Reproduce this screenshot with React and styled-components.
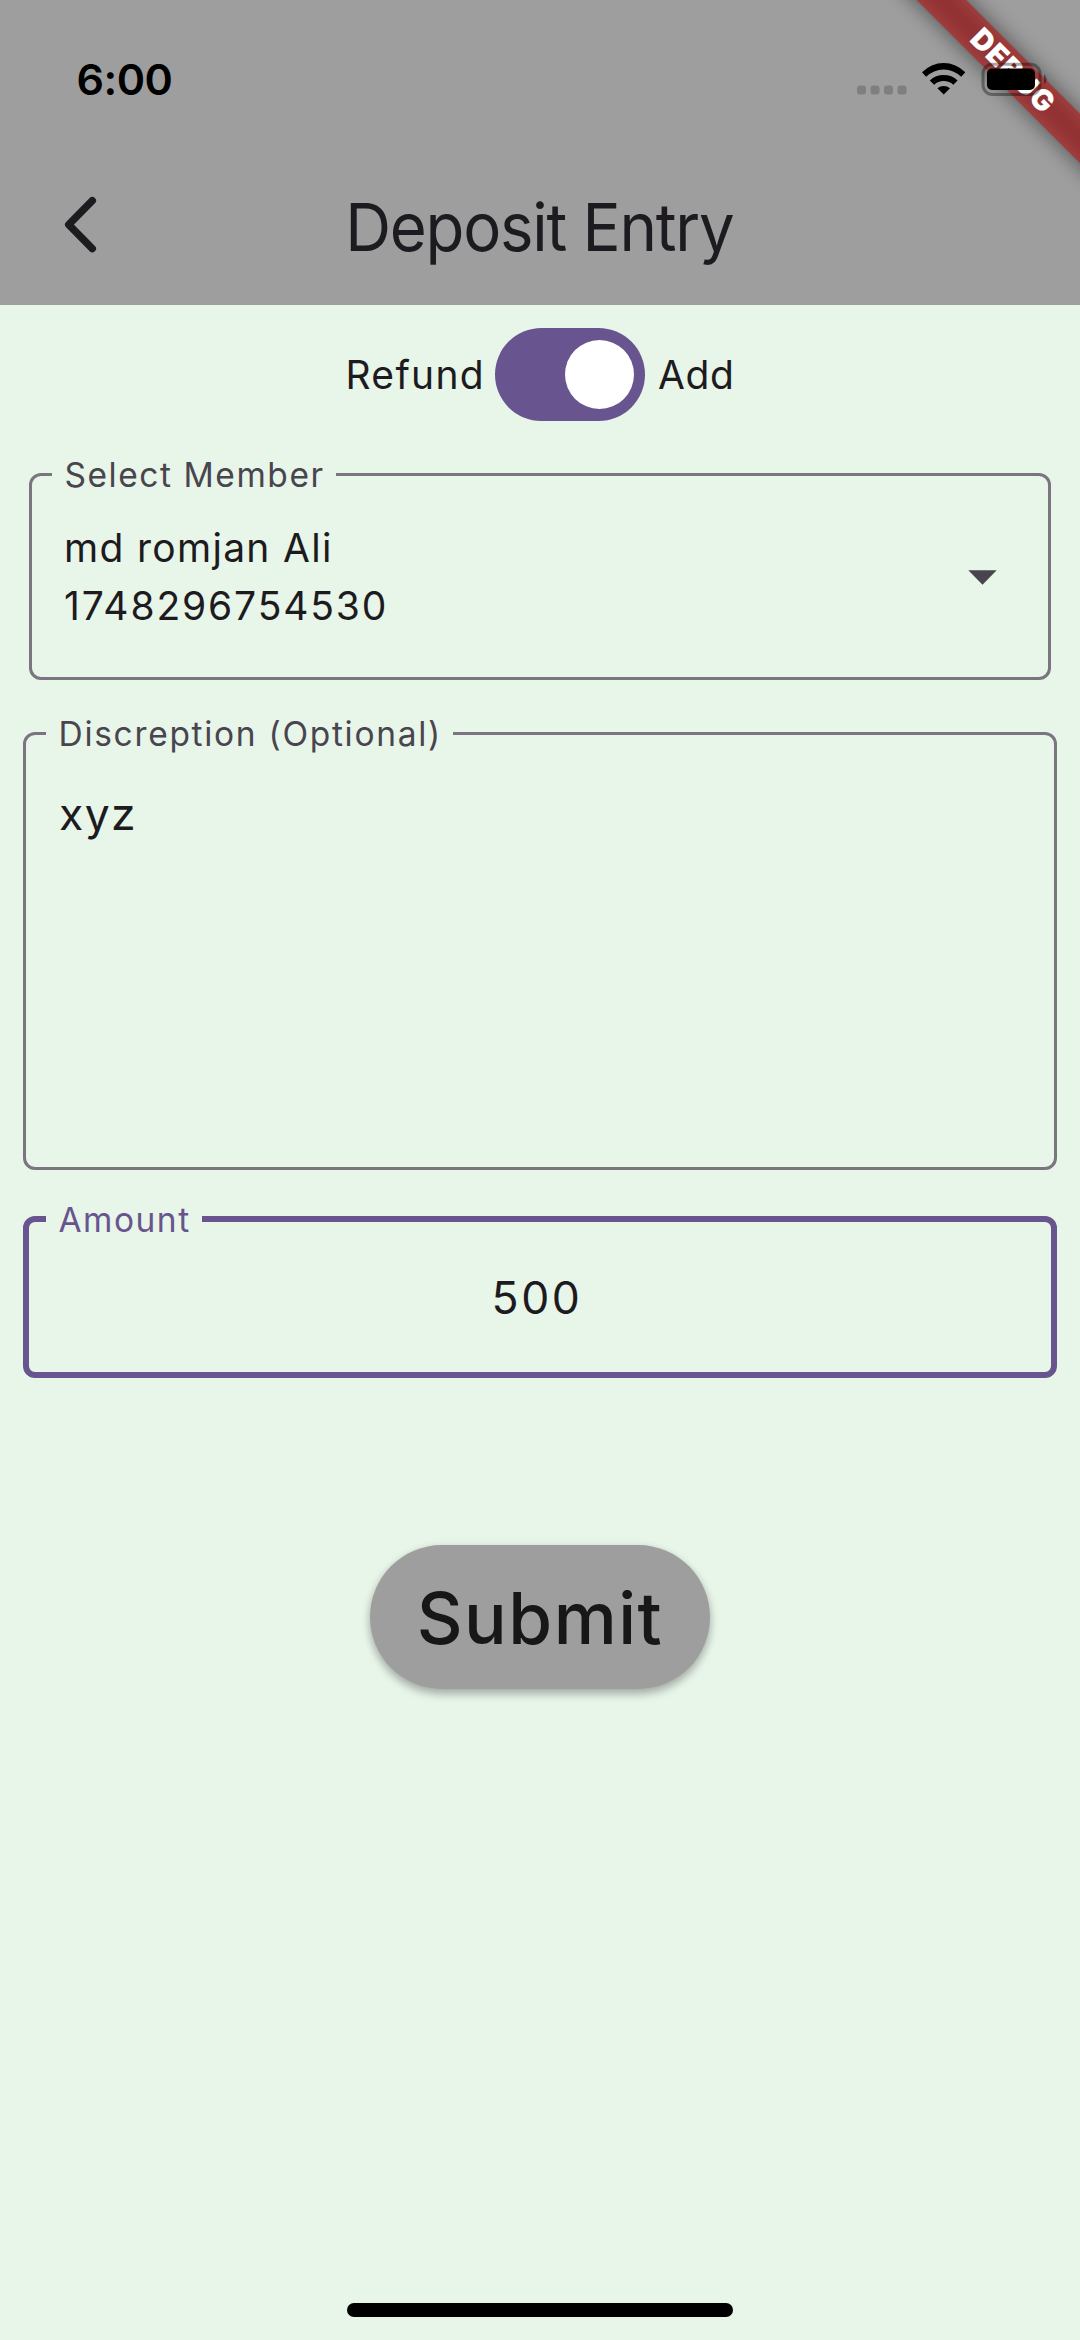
import React from "react";
import styled, { createGlobalStyle } from "styled-components";

const GlobalStyle = createGlobalStyle`
  *, *::before, *::after { box-sizing: border-box; }
  html, body { margin: 0; background: #e8f5e9; }
  body { font-family: Inter, "Liberation Sans", sans-serif; color: #1d1b20; }
`;

const Screen = styled.div`
  position: relative;
  display: flex;
  flex-direction: column;
  width: 1080px;
  height: 2340px;
  overflow: hidden;
  background: #e8f5e9;
`;

const Header = styled.header`
  display: flex;
  flex-direction: column;
  height: 305px;
  background: #9e9e9e;
`;

const StatusBar = styled.div`
  display: flex;
  align-items: center;
  justify-content: space-between;
  height: 143px;
  padding: 14px 32px 0 76.5px;
`;

const Clock = styled.span`
  font-size: 43px;
  line-height: 52px;
  font-weight: 600;
  letter-spacing: -0.5px;
  color: #000;
`;

const StatusIcons = styled.svg`
  position: relative;
  z-index: 2;
  display: block;
  width: 192px;
  height: 34px;
`;

const TitleBar = styled.div`
  display: grid;
  grid-template-columns: 162px 1fr 162px;
  align-items: center;
  height: 162px;
`;

const BackButton = styled.button`
  display: flex;
  align-items: center;
  justify-content: center;
  height: 120px;
  padding: 0;
  border: 0;
  background: none;
  color: #1d1b20;
`;

const Title = styled.h1`
  justify-self: center;
  margin: 0;
  padding: 5px 2px 0 0;
  font-size: 66.5px;
  line-height: 80px;
  font-weight: 400;
  letter-spacing: -1.3px;
  text-align: center;
  white-space: nowrap;
  transform: scaleX(0.955);
`;

const Form = styled.main`
  display: flex;
  flex-direction: column;
  align-items: stretch;
`;

const ModeRow = styled.div`
  display: flex;
  align-items: center;
  justify-content: center;
  height: 138px;
  padding-top: 1px;
`;

const ModeLabel = styled.span`
  font-size: 39px;
  line-height: 58px;
  letter-spacing: ${(p) => p.$spacing};
`;

const Switch = styled.button`
  display: flex;
  align-items: center;
  justify-content: flex-end;
  width: 150px;
  height: 92.5px;
  margin: 0 13px 0 10px;
  padding: 0 11.5px;
  border: 0;
  border-radius: 47px;
  background: #68548e;
`;

const Thumb = styled.span`
  width: 69px;
  height: 69px;
  border-radius: 50%;
  background: #fff;
`;

const Field = styled.fieldset`
  display: block;
  min-width: 0;
  height: ${(p) => p.$height}px;
  margin: ${(p) => p.$margin};
  padding: 0;
  border: ${(p) => (p.$focused ? "6px solid #68548e" : "3px solid #7a757f")};
  border-radius: 12px;
`;

const FieldLabel = styled.legend`
  height: ${(p) => (p.$focused ? 40 : 41)}px;
  margin-left: ${(p) => (p.$focused ? 17 : 20)}px;
  padding: 0 11px 0 12.5px;
  font-size: 33.5px;
  line-height: ${(p) => (p.$focused ? 43 : 42)}px;
  letter-spacing: ${(p) => p.$spacing};
  color: ${(p) => (p.$focused ? "#68548e" : "#49454e")};
  white-space: nowrap;
`;

const SelectBody = styled.div`
  display: flex;
  align-items: center;
  justify-content: space-between;
  padding: 24px 51px 0 32px;
`;

const MemberText = styled.div`
  display: flex;
  flex-direction: column;
  font-size: 39px;
  line-height: 57.6px;
`;

const MemberLine = styled.span`
  letter-spacing: ${(p) => p.$spacing};
`;

const DropdownArrow = styled.svg`
  display: block;
  width: 29px;
  height: 15px;
  margin-top: 2px;
  fill: #49454e;
`;

const FieldValue = styled.div`
  padding: ${(p) => p.$padding};
  font-size: 44.5px;
  line-height: 69px;
  letter-spacing: ${(p) => p.$spacing};
  text-align: ${(p) => p.$align || "left"};
`;

const SubmitButton = styled.button`
  align-self: center;
  width: 340px;
  height: 144px;
  margin-top: 167px;
  padding: 1px 0 0;
  border: 0;
  border-radius: 72px;
  background: #9e9e9e;
  color: #171717;
  font-family: inherit;
  font-size: 71px;
  line-height: 84px;
  font-weight: 500;
  letter-spacing: 1.5px;
  white-space: nowrap;
  box-shadow: 0 6px 8px rgba(0, 0, 0, 0.2), 0 2px 8px rgba(0, 0, 0, 0.14);
`;

const HomeIndicator = styled.div`
  align-self: center;
  width: 386px;
  height: 14px;
  margin-top: auto;
  margin-bottom: 23px;
  border-radius: 7px;
  background: #000;
`;

const Ribbon = styled.div`
  position: absolute;
  z-index: 1;
  top: 51.9px;
  left: 810.8px;
  width: 400px;
  height: 34.6px;
  transform: rotate(45deg);
`;

const RibbonShadow = styled.div`
  position: absolute;
  inset: 0;
  background: rgba(0, 0, 0, 0.5);
  filter: blur(11.4px);
`;

const RibbonBand = styled.div`
  position: relative;
  height: 100%;
  padding-left: 5px;
  background: rgba(183, 28, 28, 0.627);
  color: #fff;
  font-size: 29px;
  line-height: 34.6px;
  font-weight: 900;
  letter-spacing: 1px;
  text-align: center;
`;

export default function App() {
  return (
    <Screen>
      <GlobalStyle />
      <Header>
        <StatusBar>
          <Clock>6:00</Clock>
          <StatusIcons viewBox="0 0 192 34">
            <g fill="#7f7f7f">
              <rect x="1" y="23.5" width="9" height="9" rx="3" />
              <rect x="14.5" y="23.5" width="9" height="9" rx="3" />
              <rect x="28" y="23.5" width="9" height="9" rx="3" />
              <rect x="41.5" y="23.5" width="9" height="9" rx="3" />
            </g>
            <path d="M66 10.3 A30 30 0 0 1 109.300 10.300 L105.200 14.800 A25 25 0 0 0 70.100 14.800 Z" />
            <path d="M73.800 18.500 A20 20 0 0 1 101.600 18.500 L97.300 22.800 A14.200 14.200 0 0 0 78.100 22.800 Z" />
            <path d="M81.400 26.300 A10 10 0 0 1 94 26.300 L87.700 32.600 Z" />
            <rect x="127" y="2.2" width="57" height="30.3" rx="9.500" fill="none" stroke="#000" strokeOpacity="0.35" strokeWidth="3" />
            <rect x="131" y="6.5" width="48" height="21.5" rx="5" />
            <path d="M188 12 a6.500 6.500 0 0 1 0 10.500 Z" fillOpacity="0.4" />
          </StatusIcons>
        </StatusBar>
        <TitleBar>
          <BackButton aria-label="Back">
            <svg width="60" height="60" viewBox="0 0 60 60" fill="none" stroke="currentColor" strokeWidth="7.4" strokeLinecap="round" strokeLinejoin="round">
              <path d="M41.300 6.700 L17.700 30.700 L41.300 54.700" />
            </svg>
          </BackButton>
          <Title>Deposit Entry</Title>
        </TitleBar>
      </Header>
      <Form>
        <ModeRow>
          <ModeLabel $spacing="1.3px">Refund</ModeLabel>
          <Switch role="switch" aria-checked="true" aria-label="Add">
            <Thumb />
          </Switch>
          <ModeLabel $spacing="0.6px">Add</ModeLabel>
        </ModeRow>
        <Field $height={226} $margin="11px 29px 0">
          <FieldLabel $spacing="1.55px">Select Member</FieldLabel>
          <SelectBody>
            <MemberText>
              <MemberLine $spacing="1.3px">md romjan Ali</MemberLine>
              <MemberLine $spacing="1.85px">1748296754530</MemberLine>
            </MemberText>
            <DropdownArrow viewBox="0 0 29 15">
              <path d="M0.300 0.300 H28.700 L14.500 14.700 Z" />
            </DropdownArrow>
          </SelectBody>
        </Field>
        <Field $height={457} $margin="33px 23px 0">
          <FieldLabel $spacing="1.7px">Discreption (Optional)</FieldLabel>
          <FieldValue $padding="26px 33px" $spacing="1.4px">xyz</FieldValue>
        </Field>
        <Field $focused $height={179} $margin="29px 23px 0">
          <FieldLabel $focused $spacing="1.5px">Amount</FieldLabel>
          <FieldValue $padding="25px 38px 25px 32px" $spacing="2.6px" $align="center">500</FieldValue>
        </Field>
        <SubmitButton>Submit</SubmitButton>
      </Form>
      <HomeIndicator />
      <Ribbon>
        <RibbonShadow />
        <RibbonBand>DEBUG</RibbonBand>
      </Ribbon>
    </Screen>
  );
}
